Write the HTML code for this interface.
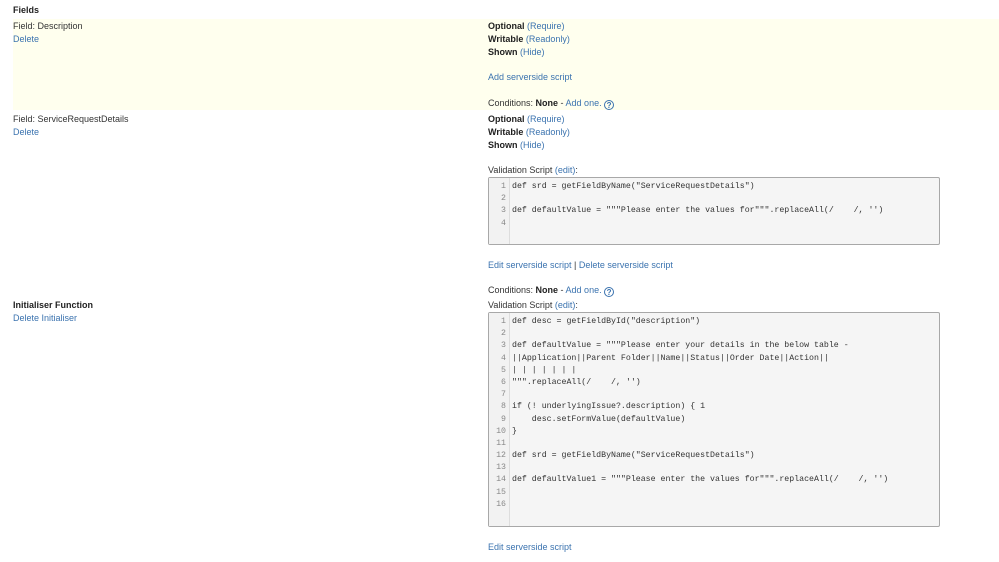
<!DOCTYPE html>
<html><head><style>
body{margin:0;width:999px;height:562px;background:#fff;position:relative;overflow:hidden;font-family:"Liberation Sans",Arial,sans-serif;font-size:9px;color:#333}
.t{position:absolute;white-space:pre;line-height:11px}
a{color:#3b73af;text-decoration:none}
b{color:#222}
.hl{position:absolute;left:13px;top:19px;width:986px;height:91px;background:#ffffee}
.box{position:absolute;left:488px;width:450px;border:1px solid #a8a8a8;border-radius:2px;background:#f5f5f5}
.gut{position:absolute;left:0;top:0;bottom:0;width:20px;border-right:1px solid #ddd;background:#f2f2f2}
.code{position:absolute;left:0;top:3px;font-family:"Liberation Mono","DejaVu Sans Mono",monospace;font-size:8.25px;line-height:12.2px;color:#333}
.code div{white-space:pre;height:12.2px}
.code span{display:inline-block;width:17px;text-align:right;color:#888;margin-right:6px}
.q{display:inline-block;width:10px;height:10px;border:1px solid #3b73af;border-radius:50%;font-size:8px;line-height:9px;text-align:center;color:#3b73af;vertical-align:-2px;box-sizing:border-box;font-weight:bold}
</style></head><body>
<div class="hl"></div>
<div class="t" style="left:13px;top:5px"><b>Fields</b></div>
<div class="t" style="left:13px;top:21px">Field: Description</div>
<div class="t" style="left:13px;top:34px"><a>Delete</a></div>
<div class="t" style="left:488px;top:21px"><b>Optional</b> <a>(Require)</a></div>
<div class="t" style="left:488px;top:34px"><b>Writable</b> <a>(Readonly)</a></div>
<div class="t" style="left:488px;top:47px"><b>Shown</b> <a>(Hide)</a></div>
<div class="t" style="left:488px;top:72px"><a>Add serverside script</a></div>
<div class="t" style="left:488px;top:98px">Conditions: <b>None</b> - <a>Add one.</a> <span class="q">?</span></div>

<div class="t" style="left:13px;top:114px">Field: ServiceRequestDetails</div>
<div class="t" style="left:13px;top:127px"><a>Delete</a></div>
<div class="t" style="left:488px;top:114px"><b>Optional</b> <a>(Require)</a></div>
<div class="t" style="left:488px;top:127px"><b>Writable</b> <a>(Readonly)</a></div>
<div class="t" style="left:488px;top:140px"><b>Shown</b> <a>(Hide)</a></div>
<div class="t" style="left:488px;top:165px">Validation Script <a>(edit)</a>:</div>
<div class="box" style="top:177px;height:66px"><div class="gut"></div><div class="code">
<div><span>1</span>def srd = getFieldByName("ServiceRequestDetails")</div>
<div><span>2</span></div>
<div><span>3</span>def defaultValue = """Please enter the values for""".replaceAll(/    /, '')</div>
<div><span>4</span></div>
</div></div>
<div class="t" style="left:488px;top:260px"><a>Edit serverside script</a> | <a>Delete serverside script</a></div>
<div class="t" style="left:488px;top:285px">Conditions: <b>None</b> - <a>Add one.</a> <span class="q">?</span></div>
<div class="t" style="left:13px;top:300px"><b>Initialiser Function</b></div>
<div class="t" style="left:13px;top:313px"><a>Delete Initialiser</a></div>
<div class="t" style="left:488px;top:300px">Validation Script <a>(edit)</a>:</div>
<div class="box" style="top:312px;height:213px"><div class="gut"></div><div class="code">
<div><span>1</span>def desc = getFieldById("description")</div>
<div><span>2</span></div>
<div><span>3</span>def defaultValue = """Please enter your details in the below table -</div>
<div><span>4</span>||Application||Parent Folder||Name||Status||Order Date||Action||</div>
<div><span>5</span>| | | | | | |</div>
<div><span>6</span>""".replaceAll(/    /, '')</div>
<div><span>7</span></div>
<div><span>8</span>if (! underlyingIssue?.description) { 1</div>
<div><span>9</span>    desc.setFormValue(defaultValue)</div>
<div><span>10</span>}</div>
<div><span>11</span></div>
<div><span>12</span>def srd = getFieldByName("ServiceRequestDetails")</div>
<div><span>13</span></div>
<div><span>14</span>def defaultValue1 = """Please enter the values for""".replaceAll(/    /, '')</div>
<div><span>15</span></div>
<div><span>16</span></div>
</div></div>
<div class="t" style="left:488px;top:542px"><a>Edit serverside script</a></div>
</body></html>
